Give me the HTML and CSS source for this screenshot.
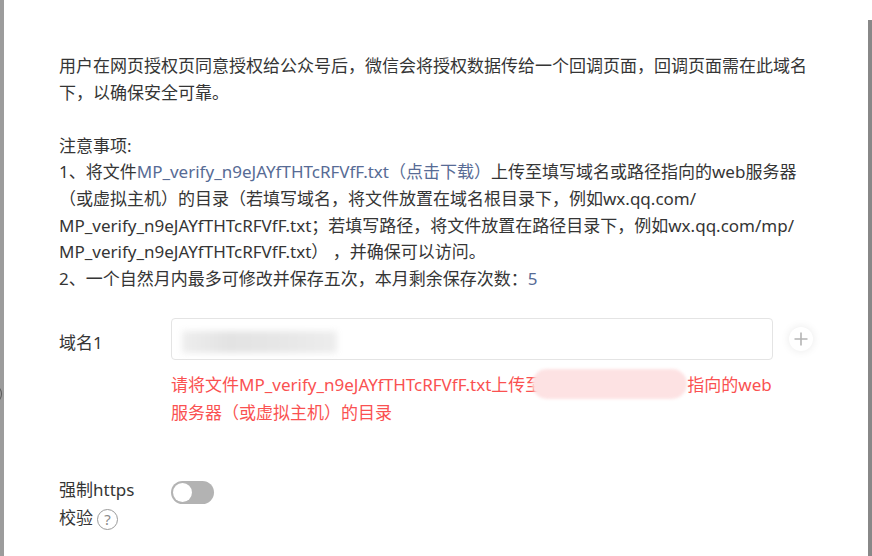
FILE: index.html
```html
<!DOCTYPE html>
<html lang="zh-CN">
<head>
<meta charset="utf-8">
<title>域名设置</title>
<link rel="stylesheet" href="styles.css">
</head>
<body>
<div class="screen">
  <div class="overlay-left"><span class="peek-icon"></span></div>
  <div class="dialog">
    <p class="intro">用户在网页授权页同意授权给公众号后，微信会将授权数据传给一个回调页面，回调页面需在此域名<br>下，以确保安全可靠。</p>
    <div class="notes">
      <div>注意事项:</div>
      <div>1、将文件<a class="link">MP_verify_n9eJAYfTHTcRFVfF.txt（点击下载）</a>上传至填写域名或路径指向的web服务器<br>（或虚拟主机）的目录（若填写域名，将文件放置在域名根目录下，例如wx.qq.com/<br>MP_verify_n9eJAYfTHTcRFVfF.txt；若填写路径，将文件放置在路径目录下，例如wx.qq.com/mp/<br>MP_verify_n9eJAYfTHTcRFVfF.txt） ，并确保可以访问。</div>
      <div>2、一个自然月内最多可修改并保存五次，本月剩余保存次数：<span class="link">5</span></div>
    </div>
    <div class="form-row domain-row">
      <div class="label">域名1</div>
      <div class="field">
        <div class="input-line">
          <div class="input"><span class="blur-value"></span></div>
          <button class="add-btn" type="button" aria-label="添加"><svg width="14" height="14" viewBox="0 0 14 14"><path d="M7 0.5V13.5M0.5 7H13.5" stroke="#b4b4b4" stroke-width="1.6" fill="none"/></svg></button>
        </div>
        <div class="error">请将文件MP_verify_n9eJAYfTHTcRFVfF.txt上传至<span class="mask"></span>指向的web<br>服务器（或虚拟主机）的目录</div>
      </div>
    </div>
    <div class="form-row https-row">
      <div class="label">
        <div>强制https</div>
        <div class="label-line"><span>校验</span><span class="help">?</span></div>
      </div>
      <div class="field">
        <span class="switch"><span class="knob"></span></span>
      </div>
    </div>
  </div>
  <div class="scroll-track"><div class="scroll-thumb"></div></div>
</div>
</body>
</html>
```
FILE: styles.css
```css
html, body {
  margin: 0;
  padding: 0;
  background: #ffffff;
}
body {
  font-family: "Noto Sans", "Noto Sans CJK SC", sans-serif;
  font-size: 17px;
  color: #353535;
}
.screen {
  display: flex;
  width: 872px;
  height: 556px;
  overflow: hidden;
}
.overlay-left {
  width: 4px;
  flex: none;
  background: #9c9c9c;
  position: relative;
}
.peek-icon {
  position: absolute;
  left: -14px;
  top: 385px;
  width: 16px;
  height: 18px;
  border: 1px solid #5a5a5a;
  border-radius: 50%;
  box-sizing: border-box;
}
.dialog {
  flex: 1;
  padding: 53px 0 0 55px;
  line-height: 26.6px;
}
.intro {
  margin: 0 0 26.6px 0;
}
.notes {
  margin-bottom: 26px;
}
.link {
  color: #576b95;
  text-decoration: none;
}
.form-row {
  display: flex;
  gap: 16px;
}
.label {
  width: 96px;
  flex: none;
  line-height: 28px;
}
.domain-row .label {
  padding-top: 11px;
}
.field {
  flex: 1;
}
.input-line {
  display: flex;
  align-items: center;
  gap: 16px;
}
.input {
  width: 602px;
  height: 42px;
  box-sizing: border-box;
  border: 1px solid #e4e4e4;
  border-radius: 4px;
  display: flex;
  align-items: center;
  padding-left: 10px;
}
.blur-value {
  display: block;
  width: 155px;
  height: 22px;
  background: linear-gradient(90deg, #eeeeee 0%, #e3e3e3 30%, #e6e6e6 60%, #ededed 100%);
  filter: blur(3px);
  margin-top: 6px;
}
.add-btn {
  width: 24px;
  height: 24px;
  border-radius: 50%;
  border: none;
  background: #ffffff;
  box-shadow: 0 0 10px rgba(0, 0, 0, 0.09);
  display: flex;
  align-items: center;
  justify-content: center;
  padding: 0;
}
.error {
  color: #fa5151;
  line-height: 28px;
  margin-top: 9px;
}
.mask {
  display: inline-block;
  width: 155px;
  height: 30px;
  vertical-align: -8px;
  background: #fde2e3;
  border-radius: 16px;
  filter: blur(1.5px);
  margin-left: -10px;
}
.https-row {
  margin-top: 49px;
  gap: 32px;
}
.https-row .label {
  width: 80px;
}
.label-line {
  display: flex;
  align-items: center;
  gap: 4px;
}
.help {
  display: flex;
  align-items: center;
  justify-content: center;
  width: 21px;
  height: 21px;
  box-sizing: border-box;
  border: 1px solid #9a9a9a;
  border-radius: 50%;
  color: #8a8a8a;
  font-size: 15px;
  line-height: 1;
  margin-top: 2px;
}
.https-row .field {
  padding-top: 5px;
}
.switch {
  display: flex;
  align-items: center;
  width: 43px;
  height: 23px;
  border-radius: 12px;
  background: #b3b3b3;
  padding: 2px;
  box-sizing: border-box;
}
.knob {
  width: 19px;
  height: 19px;
  border-radius: 50%;
  background: #ffffff;
}
.scroll-track {
  width: 4px;
  flex: none;
  padding-top: 20px;
  box-sizing: border-box;
}
.scroll-thumb {
  height: 100%;
  background: #888888;
}
```
